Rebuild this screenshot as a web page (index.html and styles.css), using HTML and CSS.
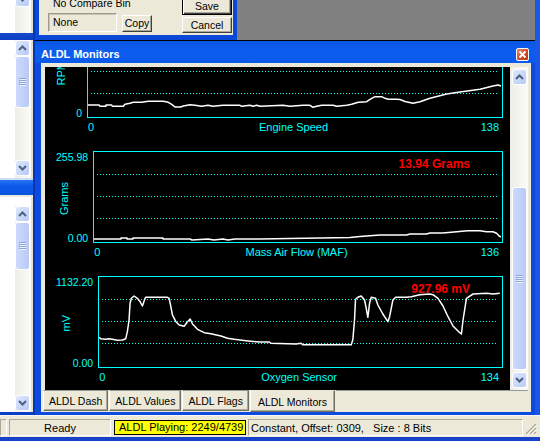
FILE: index.html
```html
<!DOCTYPE html>
<html lang="en">
<head>
  <meta charset="UTF-8" />
  <title>ALDL Monitors</title>
  <link rel="stylesheet" href="styles.css">
</head>
<body>
<div class="app">
  <div class="mdi">

    <!-- left: other MDI children, mostly hidden -->
    <div class="side">
      <div class="pane pane-top">
        <div class="vscroll">
          <div class="sb-btn sb-clip"><svg width="9" height="6" viewBox="0 0 9 6"><polyline points="1,1 4.5,4.5 8,1" fill="none" stroke="#4d6185" stroke-width="2"/></svg></div>
        </div>
      </div>
      <div class="side-title dark"></div>
      <div class="pane pane-mid">
        <div class="vscroll">
          <div class="sb-btn"><svg width="9" height="6" viewBox="0 0 9 6"><polyline points="1,5 4.5,1.5 8,5" fill="none" stroke="#4d6185" stroke-width="2"/></svg></div>
          <div class="sb-thumb thumb-mid"><svg width="7" height="8" viewBox="0 0 7 8"><path d="M0 0.5h7M0 2.5h7M0 4.5h7M0 6.5h7" stroke="#8ea2d8"/><path d="M1 1.5h6M1 3.5h6M1 5.5h6M1 7.5h6" stroke="#eef3fe"/></svg></div>
          <div class="sb-track"></div>
          <div class="sb-btn"><svg width="9" height="6" viewBox="0 0 9 6"><polyline points="1,1 4.5,4.5 8,1" fill="none" stroke="#4d6185" stroke-width="2"/></svg></div>
        </div>
      </div>
      <div class="side-title"></div>
      <div class="pane pane-low">
        <div class="vscroll">
          <div class="sb-btn"><svg width="9" height="6" viewBox="0 0 9 6"><polyline points="1,5 4.5,1.5 8,5" fill="none" stroke="#4d6185" stroke-width="2"/></svg></div>
          <div class="sb-thumb thumb-low"><svg width="7" height="8" viewBox="0 0 7 8"><path d="M0 0.5h7M0 2.5h7M0 4.5h7M0 6.5h7" stroke="#8ea2d8"/><path d="M1 1.5h6M1 3.5h6M1 5.5h6M1 7.5h6" stroke="#eef3fe"/></svg></div>
          <div class="sb-track"></div>
          <div class="sb-btn"><svg width="9" height="6" viewBox="0 0 9 6"><polyline points="1,1 4.5,4.5 8,1" fill="none" stroke="#4d6185" stroke-width="2"/></svg></div>
        </div>
      </div>
    </div>

    <div class="main">
      <!-- compare dialog, scrolled partly out of view -->
      <div class="top-row">
        <div class="dialog">
          <div class="dlg-left">
            <div class="dlg-label">No Compare Bin</div>
            <div class="dlg-row">
              <div class="dlg-input">None</div>
              <div class="btn btn-copy">Copy</div>
            </div>
          </div>
          <div class="dlg-right">
            <div class="btn btn-save">Save</div>
            <div class="btn btn-cancel">Cancel</div>
          </div>
        </div>
      </div>

      <!-- ALDL Monitors window -->
      <div class="win">
        <div class="win-title">
          <span>ALDL Monitors</span>
          <span class="win-close"><svg width="9" height="9" viewBox="0 0 9 9"><path d="M1.5 1.5L7.5 7.5M7.5 1.5L1.5 7.5" stroke="#fff" stroke-width="2"/></svg></span>
        </div>
        <div class="win-body">
          <div class="monitor">
            <div class="scope">
              <div class="charts">

                <div class="chart">
                  <div class="axis axis-rpm">
                    <span class="ymax"></span>
                    <span class="ytitle">RPM</span>
                    <span class="ymin">0</span>
                  </div>
                  <div class="graph">
                    <div class="plot">
                      <svg viewBox="88 27 414 90" preserveAspectRatio="none">
                        <g class="grid">
                          <line x1="91" y1="49.5" x2="498" y2="49.5"/>
                          <line x1="91" y1="71.5" x2="498" y2="71.5"/>
                          <line x1="91" y1="93.5" x2="498" y2="93.5"/>
                        </g>
                        <polyline class="trace" points="88,105 99,105 100,106.3 106,106.3 106,105 111.7,105 112.3,106.3 123.3,106.3 125,104.3 130,103.3 133.3,102.3 141.7,102.3 148.3,101.3 163.3,101.3 168.3,102.3 171.7,104.3 175,107 180.7,107 183.3,106 190,104.7 195,105.3 201.7,106.3 208,105.3 213,106.3 223,105.3 240,105.3 241.7,106.3 250,105.3 253,106.3 256.7,105.3 260,106.3 283,105.3 290,106.3 303,105.3 310,105.3 313,107.3 316.7,106.3 321.7,105.3 333,105.3 336.7,106.3 346.7,105.3 351.7,104.3 358.3,102.3 366.7,101.7 370,99.3 375,96.7 381.7,96.7 385,98.3 388.3,99.3 396.7,99.3 400,99.5 405,101.5 413,103.3 420,101.7 430,98.3 446.7,94 460,92 480,89.3 493,86 498,85 501,86"/>
                      </svg>
                    </div>
                    <div class="xaxis"><span>0</span><span>Engine Speed</span><span class="xmax">138</span></div>
                  </div>
                </div>

                <div class="chart">
                  <div class="axis">
                    <span class="ymax">255.98</span>
                    <span class="ytitle">Grams</span>
                    <span class="ymin">0.00</span>
                  </div>
                  <div class="graph">
                    <div class="plot">
                      <svg viewBox="94 152 408 90" preserveAspectRatio="none">
                        <g class="grid">
                          <line x1="97" y1="174.5" x2="498" y2="174.5"/>
                          <line x1="97" y1="196.5" x2="498" y2="196.5"/>
                          <line x1="97" y1="218.5" x2="498" y2="218.5"/>
                        </g>
                        <polyline class="trace" points="94,239 121,239 121,238 127,238 127,239 133,239 133,238 163,238 163,239 190,239 192,240 208,239 214,240 223,239 228,240 235,239 260,239 290,238.5 320,238 350,237.5 360,236.5 380,235 406.7,235 410,234 426.7,234 430,233 443,233 456.7,231.7 468,230.7 480,230.7 486.7,231.7 493,231.7 496.7,233.3 499.3,236 501,237"/>
                      </svg>
                      <span class="readout">13.94 Grams</span>
                    </div>
                    <div class="xaxis"><span>0</span><span>Mass Air Flow (MAF)</span><span class="xmax">136</span></div>
                  </div>
                </div>

                <div class="chart">
                  <div class="axis">
                    <span class="ymax">1132.20</span>
                    <span class="ytitle">mV</span>
                    <span class="ymin">0.00</span>
                  </div>
                  <div class="graph">
                    <div class="plot">
                      <svg viewBox="100 277 402 90" preserveAspectRatio="none">
                        <g class="grid">
                          <line x1="103" y1="299.5" x2="498" y2="299.5"/>
                          <line x1="103" y1="321.5" x2="498" y2="321.5"/>
                          <line x1="103" y1="343.5" x2="498" y2="343.5"/>
                        </g>
                        <polyline class="trace" points="100,337.3 101.7,338.7 106.7,339.3 110,338.7 113.3,339.3 118.3,340.3 123.3,340 126.7,338.7 128.3,331.7 130,320 131,303.3 132.3,298.3 135,296 138.3,298.3 141,301.7 143.3,306 146,298.3 146.7,297.3 168.3,297.3 170,298.3 171.7,306.7 173.3,315 176.7,321.7 180,325 185,326.3 188.3,321.7 191,319 193.3,324 198.3,329.3 205,332.7 211.7,333.7 221.7,336 228.3,338.3 235,339.3 246.7,340.7 260,342 270,342 271.7,343.3 296.7,344 301.7,343.3 303.3,344.7 351.7,344.7 353.3,340 355,320 356,299.3 358.3,297.3 361.7,296 365,300 366.7,308.3 368.3,317.3 370,303.3 371.7,297.3 376,298.3 378.3,305 383.3,314 388.3,321.7 390,316.7 393.3,300 396,297.3 406.7,297.3 411.7,296.7 420,294.7 430,294 433.3,294.7 438.3,298.3 443.3,306 448.3,316.7 453.3,326 460,332.7 461.7,334 463.3,320 466.7,298.3 473.3,294 486.7,293.3 493.3,294 500,293.3"/>
                      </svg>
                      <span class="readout">927.96 mV</span>
                    </div>
                    <div class="xaxis"><span>0</span><span>Oxygen Sensor</span><span class="xmax">134</span></div>
                  </div>
                </div>

              </div>
            </div>
            <div class="vscroll big">
              <div class="sb-btn"><svg width="9" height="6" viewBox="0 0 9 6"><polyline points="1,5 4.5,1.5 8,5" fill="none" stroke="#4d6185" stroke-width="2"/></svg></div>
              <div class="sb-track track-top"></div>
              <div class="sb-thumb thumb-big"><svg width="7" height="8" viewBox="0 0 7 8"><path d="M0 0.5h7M0 2.5h7M0 4.5h7M0 6.5h7" stroke="#8ea2d8"/><path d="M1 1.5h6M1 3.5h6M1 5.5h6M1 7.5h6" stroke="#eef3fe"/></svg></div>
              <div class="sb-track"></div>
              <div class="sb-btn"><svg width="9" height="6" viewBox="0 0 9 6"><polyline points="1,1 4.5,4.5 8,1" fill="none" stroke="#4d6185" stroke-width="2"/></svg></div>
            </div>
          </div>
          <div class="tabs">
            <span class="tab">ALDL Dash</span>
            <span class="tab">ALDL Values</span>
            <span class="tab">ALDL Flags</span>
            <span class="tab active">ALDL Monitors</span>
            <span class="tab-rest"></span>
          </div>
        </div>
      </div>
    </div>
  </div>

  <div class="status">
    <span class="cell cell-first"></span>
    <span class="cell cell-ready">Ready</span>
    <span class="cell-play">ALDL Playing: 2249/4739</span>
    <span class="cell cell-info">Constant, Offset: 0309,&nbsp;&nbsp; Size : 8 Bits</span>
    <span class="grip"><svg width="12" height="12" viewBox="0 0 12 12"><path d="M11 1L1 11M11 5L5 11M11 9L9 11" stroke="#aca899" stroke-width="1.3"/><path d="M12 2L2 12M12 6L6 12M12 10L10 12" stroke="#fff" stroke-width="1"/></svg></span>
  </div>
</div>
</body>
</html>
```

FILE: styles.css
```css
* { box-sizing: border-box; }
body { margin: 0; width: 540px; height: 441px; overflow: hidden; font-family: "Liberation Sans", Arial, sans-serif; font-size: 11px; background: #ece9d8; }

.app { width: 540px; height: 441px; display: flex; flex-direction: column; border-bottom: 4px solid #1642c9; }
.mdi { height: 415px; display: flex; border-right: 5px solid #1d55e6; background: #808080; }

/* left MDI children */
.side { width: 35px; display: flex; flex-direction: column; background: #0b3ec7; border-right: 2px solid #0a35b0; }
.pane { display: flex; justify-content: flex-end; background: #fff; border-right: 2px solid #e4e1d6; overflow: hidden; }
.pane .vscroll { width: 16px; padding-right: 1px; }
.pane-top { height: 33px; }
.pane-mid { height: 138px; }
.pane-mid .vscroll { padding-bottom: 2px; }
.pane-low { height: 215px; padding-top: 9px; }
.pane-low .vscroll { padding-bottom: 1px; }
.side-title { height: 19px; border-top: 2px solid #cfdcf6; border-bottom: 2px solid #ece9d8; background: linear-gradient(#2a74f2, #0b5ae8 40%, #0a55e0); }
.side-title.dark { height: 7px; border: 0; background: linear-gradient(#1748c9, #0c3fc4); }

/* XP scrollbars */
.vscroll { display: flex; flex-direction: column; background: linear-gradient(to right, #eeede6, #fbfbf8); }
.sb-btn { height: 16px; flex: none; display: flex; align-items: center; justify-content: center; border: 1px solid #fff; border-radius: 3px; background: linear-gradient(135deg, #dfe8fd, #b7caf6); }
.sb-clip { margin-top: -9px; }
.sb-thumb { flex: none; display: flex; align-items: center; justify-content: center; border: 1px solid #fff; border-radius: 3px; background: linear-gradient(to right, #cddafc, #b8caf6); }
.sb-track { flex: 1; }
.thumb-mid { height: 52px; }
.thumb-low { height: 48px; }
.thumb-big { height: 183px; }
.track-top { flex: none; height: 102px; }

/* main column */
.main { width: 500px; display: flex; flex-direction: column; }
.top-row { height: 41px; display: flex; background: #808080; border-bottom: 1px solid #000; }
.dialog { width: 202px; height: 40px; display: flex; background: #ece9d8; border: solid #0c48d8; border-width: 0 4px 5px; font-size: 10.5px; line-height: 13px; overflow: hidden; }
.dlg-left { padding-left: 9px; }
.dlg-label { margin: -3px 0 0 5px; white-space: nowrap; }
.dlg-row { display: flex; margin-top: 3px; }
.dlg-input { width: 69px; height: 19px; padding: 2px 0 0 4px; border: 1px solid; border-color: #9d9a8c #fff #fff #9d9a8c; box-shadow: inset 1px 1px 0 #c9c6b9; }
.btn { display: flex; align-items: center; justify-content: center; border: 1px solid; border-color: #fff #404040 #404040 #fff; box-shadow: inset -1px -1px 0 #aca899; background: #ece9d8; }
.btn-copy { width: 30px; height: 17px; margin: 2px 0 0 5px; }
.dlg-right { width: 50px; margin: 0 1px 0 auto; display: flex; flex-direction: column; }
.btn-save { height: 20px; margin-top: -5px; padding-top: 2px; border: 1px solid #000; box-shadow: inset 1px 1px 0 #fff, inset -1px -1px 0 #404040, inset -2px -2px 0 #aca899; }
.btn-cancel { height: 16px; margin-top: 2px; }

/* window */
.win { flex: 1; display: flex; flex-direction: column; }
.win-title { height: 22px; flex: none; display: flex; align-items: center; padding: 3px 6px 0 6px; color: #fff; font-weight: bold; font-size: 11px; background: linear-gradient(#0b56e4, #0c5ef0 45%, #0a5aea); }
.win-close { width: 13px; height: 13px; margin: 1px 0 0 auto; display: flex; align-items: center; justify-content: center; border: 1px solid #fff; border-radius: 2px; background: linear-gradient(135deg, #ec8662, #cf4622 60%, #c03a18); }
.win-body { flex: 1; display: flex; flex-direction: column; background: #ece9d8; border: solid #0b4be0; border-width: 0 4px 3px 6px; padding: 4px 3px 0 4px; }
.monitor { height: 323px; display: flex; }
.scope { flex: 1; background: #000; color: #0ff; overflow: hidden; }
.vscroll.big { width: 18px; padding: 2px 1px 2px 2px; }

/* charts */
.charts { margin-top: -41px; padding: 0 7px 0 11px; }
.chart { display: flex; gap: 5px; margin-bottom: 17px; }
.axis { height: 92px; display: grid; grid-template-rows: 13px 1fr auto; font-size: 10.5px; line-height: 13px; }
.axis-rpm { min-width: 26px; }
.ymax, .ymin { justify-self: end; }
.ymin { margin-bottom: -2px; }
.ytitle { justify-self: center; align-self: center; writing-mode: vertical-rl; transform: translateX(-8px) rotate(180deg); font-size: 11px; line-height: 13px; }
.graph { flex: 1; }
.plot { position: relative; height: 92px; border: 1px solid #0ff; }
.plot svg { display: block; width: 100%; height: 90px; }
.grid line { stroke: #0ff; stroke-width: 1; stroke-dasharray: 1 2; vector-effect: non-scaling-stroke; }
.trace { fill: none; stroke: #fff; stroke-width: 1.5; stroke-linejoin: round; vector-effect: non-scaling-stroke; }
.readout { position: absolute; top: 5px; right: 32px; color: #f00; font-weight: bold; font-size: 12px; line-height: 14px; }
.xaxis { display: grid; grid-template-columns: 1fr auto 1fr; margin-top: 3px; padding: 0 4px 0 1px; font-size: 11px; line-height: 13px; }
.xmax { justify-self: end; }

/* bottom tabs */
.tabs { height: 22px; display: flex; margin-left: -2px; font-size: 10.5px; }
.tab { height: 21px; padding: 1px 5px 0; margin-right: 1px; line-height: 18px; white-space: nowrap; border: 1px solid; border-color: #919b9c #716f64 #716f64 #fff; box-shadow: inset -1px -1px 0 #aca899; }
.tab.active { height: 22px; padding: 3px 7px 0; line-height: 17px; border-top-color: #ece9d8; }
.tab-rest { flex: 1; border-top: 1px solid #919b9c; }

/* status bar */
.status { height: 22px; display: flex; gap: 2px; padding: 3px 0 2px; line-height: 15px; background: #ece9d8; border-top: 1px solid #f7f6f1; white-space: nowrap; }
.cell { height: 17px; padding-top: 1px; border: 1px solid; border-color: #aca899 #fff #fff #aca899; }
.cell-first { width: 7px; }
.cell-ready { width: 102px; text-align: center; }
.cell-play { height: 15px; align-self: flex-end; margin-left: 1px; padding: 0 0 0 4px; width: 132px; line-height: 13px; background: #ff0; border: 1px solid #000; }
.cell-info { flex: 1; padding-left: 2px; }
.grip { align-self: flex-end; width: 12px; height: 12px; margin-right: 3px; }
.grip svg { display: block; }
```
